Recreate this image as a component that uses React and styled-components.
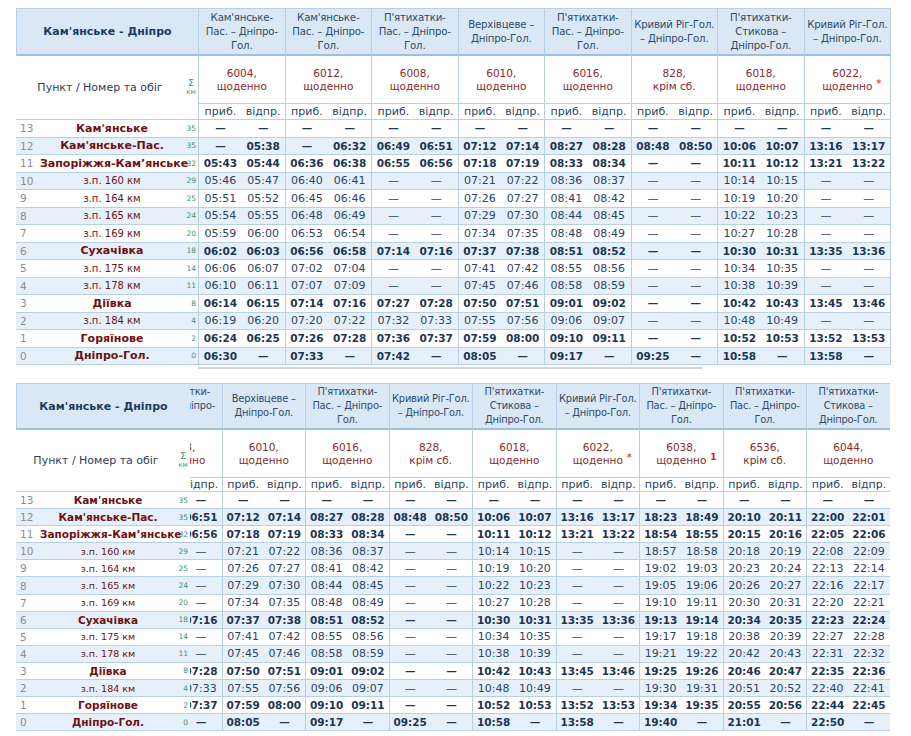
import React, { useLayoutEffect, useRef } from "react";
import styled, { createGlobalStyle } from "styled-components";

const GlobalStyle = createGlobalStyle`
  html, body {
    margin: 0;
    background: #fff;
  }
  body {
    font-family: "DejaVu Sans", Verdana, sans-serif;
  }
`;

const STATIONS = [
  { n: 13, name: "Кам'янське", km: 35, main: true },
  { n: 12, name: "Кам'янське-Пас.", km: 35, main: true },
  { n: 11, name: "Запоріжжя-Кам’янське", km: 32, main: true },
  { n: 10, name: "з.п. 160 км", km: 29 },
  { n: 9, name: "з.п. 164 км", km: 25 },
  { n: 8, name: "з.п. 165 км", km: 24 },
  { n: 7, name: "з.п. 169 км", km: 20 },
  { n: 6, name: "Сухачівка", km: 18, main: true },
  { n: 5, name: "з.п. 175 км", km: 14 },
  { n: 4, name: "з.п. 178 км", km: 11 },
  { n: 3, name: "Діївка", km: 8, main: true },
  { n: 2, name: "з.п. 184 км", km: 4 },
  { n: 1, name: "Горяїнове", km: 2, main: true },
  { n: 0, name: "Дніпро-Гол.", km: 0, main: true },
];

// "приб/відп" for every stop, from station 13 down to 0
const parse = (s) =>
  s.split(",").map((p) => p.trim().split("/").map((v) => (v === "-" ? "—" : v)));

const TRAINS = [
  {
    route: "Кам'янське-Пас. – Дніпро-Гол.",
    no: "6004",
    days: "щоденно",
    times: parse("-/-, -/05:38, 05:43/05:44, 05:46/05:47, 05:51/05:52, 05:54/05:55, 05:59/06:00, 06:02/06:03, 06:06/06:07, 06:10/06:11, 06:14/06:15, 06:19/06:20, 06:24/06:25, 06:30/-"),
  },
  {
    route: "Кам'янське-Пас. – Дніпро-Гол.",
    no: "6012",
    days: "щоденно",
    times: parse("-/-, -/06:32, 06:36/06:38, 06:40/06:41, 06:45/06:46, 06:48/06:49, 06:53/06:54, 06:56/06:58, 07:02/07:04, 07:07/07:09, 07:14/07:16, 07:20/07:22, 07:26/07:28, 07:33/-"),
  },
  {
    route: "П'ятихатки-Пас. – Дніпро-Гол.",
    no: "6008",
    days: "щоденно",
    times: parse("-/-, 06:49/06:51, 06:55/06:56, -/-, -/-, -/-, -/-, 07:14/07:16, -/-, -/-, 07:27/07:28, 07:32/07:33, 07:36/07:37, 07:42/-"),
  },
  {
    route: "Верхівцеве – Дніпро-Гол.",
    no: "6010",
    days: "щоденно",
    times: parse("-/-, 07:12/07:14, 07:18/07:19, 07:21/07:22, 07:26/07:27, 07:29/07:30, 07:34/07:35, 07:37/07:38, 07:41/07:42, 07:45/07:46, 07:50/07:51, 07:55/07:56, 07:59/08:00, 08:05/-"),
  },
  {
    route: "П'ятихатки-Пас. – Дніпро-Гол.",
    no: "6016",
    days: "щоденно",
    times: parse("-/-, 08:27/08:28, 08:33/08:34, 08:36/08:37, 08:41/08:42, 08:44/08:45, 08:48/08:49, 08:51/08:52, 08:55/08:56, 08:58/08:59, 09:01/09:02, 09:06/09:07, 09:10/09:11, 09:17/-"),
  },
  {
    route: "Кривий Ріг-Гол. – Дніпро-Гол.",
    no: "828",
    days: "крім сб.",
    times: parse("-/-, 08:48/08:50, -/-, -/-, -/-, -/-, -/-, -/-, -/-, -/-, -/-, -/-, -/-, 09:25/-"),
  },
  {
    route: "П'ятихатки-Стикова – Дніпро-Гол.",
    no: "6018",
    days: "щоденно",
    times: parse("-/-, 10:06/10:07, 10:11/10:12, 10:14/10:15, 10:19/10:20, 10:22/10:23, 10:27/10:28, 10:30/10:31, 10:34/10:35, 10:38/10:39, 10:42/10:43, 10:48/10:49, 10:52/10:53, 10:58/-"),
  },
  {
    route: "Кривий Ріг-Гол. – Дніпро-Гол.",
    no: "6022",
    days: "щоденно",
    mark: "*",
    times: parse("-/-, 13:16/13:17, 13:21/13:22, -/-, -/-, -/-, -/-, 13:35/13:36, -/-, -/-, 13:45/13:46, -/-, 13:52/13:53, 13:58/-"),
  },
  {
    route: "П'ятихатки-Пас. – Дніпро-Гол.",
    no: "6038",
    days: "щоденно",
    mark: "1",
    times: parse("-/-, 18:23/18:49, 18:54/18:55, 18:57/18:58, 19:02/19:03, 19:05/19:06, 19:10/19:11, 19:13/19:14, 19:17/19:18, 19:21/19:22, 19:25/19:26, 19:30/19:31, 19:34/19:35, 19:40/-"),
  },
  {
    route: "П'ятихатки-Пас. – Дніпро-Гол.",
    no: "6536",
    days: "крім сб.",
    times: parse("-/-, 20:10/20:11, 20:15/20:16, 20:18/20:19, 20:23/20:24, 20:26/20:27, 20:30/20:31, 20:34/20:35, 20:38/20:39, 20:42/20:43, 20:46/20:47, 20:51/20:52, 20:55/20:56, 21:01/-"),
  },
  {
    route: "П'ятихатки-Стикова – Дніпро-Гол.",
    no: "6044",
    days: "щоденно",
    times: parse("-/-, 22:00/22:01, 22:05/22:06, 22:08/22:09, 22:13/22:14, 22:16/22:17, 22:20/22:21, 22:23/22:24, 22:27/22:28, 22:31/22:32, 22:35/22:36, 22:40/22:41, 22:44/22:45, 22:50/-"),
  },
];

const LINE = "#b7cfe7";
const HEAD_BG = "#dae8f6";
const STRIPE = "#e6f0fa";

const Page = styled.div`
  display: flex;
  flex-direction: column;
  gap: 13px;
  padding: 8px 0 0 16px;
`;

const Table = styled.div`
  display: flex;
  align-items: flex-start;
`;

const Fixed = styled.div`
  width: ${(p) => p.$w}px;
  flex: none;
  border-bottom: 1px solid ${LINE};
`;

const TitleCell = styled.div`
  box-sizing: border-box;
  height: ${(p) => p.$h}px;
  display: flex;
  align-items: center;
  justify-content: center;
  background: ${HEAD_BG};
  border-top: 1px solid ${LINE};
  border-left: 1px solid ${LINE};
  border-bottom: 2px solid #9dbfe1;
  color: #1c3a5e;
  font-size: 11px;
  font-weight: bold;
`;

const StubCell = styled.div`
  box-sizing: border-box;
  height: ${(p) => p.$h}px;
  display: flex;
  align-items: center;
`;

const StubLabel = styled.div`
  flex: 1;
  text-align: center;
  color: #2c3e55;
  font-size: 11px;
`;

const KmHead = styled.div`
  width: 14px;
  display: flex;
  flex-direction: column;
  align-items: center;
  color: #3c8f7c;
  font-size: 7px;
  line-height: 9px;
  & > span:first-child {
    font-size: 9px;
  }
`;

const StationRow = styled.div`
  box-sizing: border-box;
  height: ${(p) => p.$h}px;
  display: flex;
  align-items: center;
  border-top: 1px solid ${LINE};
  background: ${(p) => (p.$alt ? STRIPE : "#fff")};
`;

const StopNo = styled.div`
  width: 24px;
  flex: none;
  padding-left: 4px;
  box-sizing: border-box;
  color: #8d8d8d;
  font-size: 10.5px;
`;

const StationName = styled.div`
  flex: 1;
  min-width: 0;
  text-align: center;
  white-space: nowrap;
  color: #6f1111;
  font-size: ${(p) => (p.$main ? p.$fs : p.$fs - 1)}px;
  font-weight: ${(p) => (p.$main ? "bold" : "normal")};
`;

const Km = styled.div`
  width: 14px;
  flex: none;
  padding-right: 2px;
  box-sizing: border-box;
  text-align: right;
  color: #3f8f70;
  font-size: 7.5px;
`;

const ScrollArea = styled.div`
  display: flex;
  flex-direction: column;
`;

const Pane = styled.div`
  width: ${(p) => p.$w}px;
  overflow: hidden;
`;

const Grid = styled.div`
  display: grid;
  grid-template-columns: repeat(${(p) => p.$cols}, ${(p) => p.$cw}px);
  width: max-content;
  border-bottom: 1px solid ${LINE};
`;

const Cell = styled.div`
  box-sizing: border-box;
  height: ${(p) => p.$h}px;
  border-left: 1px solid ${LINE};
`;

const RouteCell = styled(Cell)`
  display: flex;
  align-items: center;
  justify-content: center;
  padding: 0 1px;
  text-align: center;
  background: ${HEAD_BG};
  border-top: 1px solid ${LINE};
  border-bottom: 2px solid #9dbfe1;
  color: #2f4b6b;
  font-size: ${(p) => p.$fs}px;
  letter-spacing: -0.2px;
  line-height: 14px;
`;

const NumberCell = styled(Cell)`
  display: flex;
  align-items: center;
  justify-content: center;
  text-align: center;
  color: #872b2b;
  font-size: 10.5px;
  line-height: 13px;
`;

const Mark = styled.sup`
  position: absolute;
  top: -3px;
  left: 100%;
  margin-left: 4px;
  color: #c42020;
  font-size: ${(p) => (p.$num ? "9px" : "10px")};
  font-weight: ${(p) => (p.$num ? "bold" : "normal")};
`;

const Days = styled.span`
  position: relative;
  display: block;
`;

const PairCell = styled(Cell)`
  display: flex;
  align-items: center;
  border-top: 1px solid ${LINE};
  background: ${(p) => (p.$alt ? STRIPE : "#fff")};
`;

const Half = styled.div`
  flex: 1;
  text-align: center;
  white-space: nowrap;
  color: ${(p) => (p.$main ? "#1b3554" : "#2b4462")};
  font-size: ${(p) => (p.$main ? "10.5px" : "11px")};
  font-weight: ${(p) => (p.$main ? "bold" : "normal")};
`;

const Scrollbar = styled.div`
  height: 5px;
  padding-top: 2px;
  box-sizing: border-box;
`;

const Thumb = styled.div`
  height: 2px;
  background: #d4d2d2;
  border-radius: 1px;
`;

function Timetable({ d, scroll = 0, scrollbar = false }) {
  const paneRef = useRef(null);

  useLayoutEffect(() => {
    if (paneRef.current) paneRef.current.scrollLeft = scroll;
  }, [scroll]);

  const total = TRAINS.length * d.col;
  const thumb = Math.round((d.pane / total) * d.pane);

  return (
    <Table>
      <Fixed $w={d.left}>
        <TitleCell $h={d.h1}>Кам'янське - Дніпро</TitleCell>
        <StubCell $h={d.h2 + d.h3}>
          <StubLabel>Пункт / Номер та обіг</StubLabel>
          <KmHead>
            <span>Σ</span>
            <span>км</span>
          </KmHead>
        </StubCell>
        {STATIONS.map((s, i) => (
          <StationRow key={s.n} $h={d.row} $alt={i % 2 === 1}>
            <StopNo>{s.n}</StopNo>
            <StationName $main={s.main} $fs={d.nameFs}>
              {s.name}
            </StationName>
            <Km>{s.km}</Km>
          </StationRow>
        ))}
      </Fixed>

      <ScrollArea>
        <Pane ref={paneRef} $w={d.pane}>
          <Grid $cols={TRAINS.length} $cw={d.col}>
            {TRAINS.map((t) => (
              <RouteCell key={"r" + t.no} $h={d.h1} $fs={d.routeFs}>
                {t.route}
              </RouteCell>
            ))}
            {TRAINS.map((t) => (
              <NumberCell key={"n" + t.no} $h={d.h2}>
                <div>
                  {t.no},
                  <Days>
                    {t.days}
                    {t.mark && <Mark $num={t.mark !== "*"}>{t.mark}</Mark>}
                  </Days>
                </div>
              </NumberCell>
            ))}
            {TRAINS.map((t) => (
              <PairCell key={"l" + t.no} $h={d.h3}>
                <Half>приб.</Half>
                <Half>відпр.</Half>
              </PairCell>
            ))}
            {STATIONS.map((s, i) =>
              TRAINS.map((t) => (
                <PairCell key={s.n + "-" + t.no} $h={d.row} $alt={i % 2 === 1}>
                  <Half $main={s.main}>{t.times[i][0]}</Half>
                  <Half $main={s.main}>{t.times[i][1]}</Half>
                </PairCell>
              ))
            )}
          </Grid>
        </Pane>
        {scrollbar && (
          <Scrollbar>
            <Thumb style={{ width: thumb }} />
          </Scrollbar>
        )}
      </ScrollArea>
    </Table>
  );
}

const TOP = { left: 182, col: 86.5, pane: 693, h1: 48, h2: 47, h3: 16, row: 17.5, routeFs: 10.2, nameFs: 11 };
const BOTTOM = { left: 174, col: 83.5, pane: 700, h1: 47, h2: 47, h3: 14, row: 17.1, routeFs: 9.9, nameFs: 10.5 };

export default function App() {
  return (
    <>
      <GlobalStyle />
      <Page>
        <Timetable d={TOP} scrollbar />
        <Timetable d={BOTTOM} scroll={220} />
      </Page>
    </>
  );
}
